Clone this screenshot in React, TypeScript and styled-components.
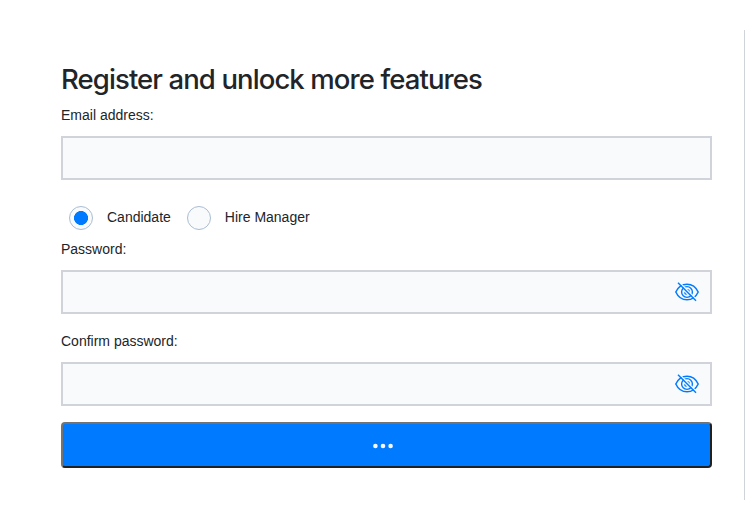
import React, { useState } from 'react';
import styled, { createGlobalStyle } from 'styled-components';

const GlobalStyle = createGlobalStyle`
  *, *::before, *::after { box-sizing: border-box; }
  body {
    margin: 0;
    background: #fff;
    color: #212529;
    font-family: "Liberation Sans", Arial, sans-serif;
    font-size: 14px;
  }
`;

const Page = styled.main`
  height: 530px;
  padding: 30px 0;
`;

const Panel = styled.form`
  height: 470px;
  padding: 32px 32px 0 61px;
  border-right: 1px solid #d1d3db;
  display: flex;
  flex-direction: column;
`;

const Title = styled.h1`
  margin: 0 0 8px;
  height: 34px;
  font: 550 27.5px/34px Inter, sans-serif;
  letter-spacing: -0.9px;
  white-space: nowrap;
`;

const Field = styled.div<{ $gap: number }>`
  display: flex;
  flex-direction: column;
  margin-bottom: ${({ $gap }) => $gap}px;
`;

const Label = styled.label`
  line-height: 22px;
  margin-bottom: 10px;
`;

const InputBox = styled.div`
  display: flex;
  align-items: center;
  height: 44px;
  padding-right: 11px;
  background: #f9fafc;
  border: 2px solid #d1d3db;
`;

const Input = styled.input`
  flex: 1;
  min-width: 0;
  height: 100%;
  padding: 0 12px;
  border: 0;
  outline: 0;
  background: transparent;
  font: inherit;
  color: inherit;
`;

const IconButton = styled.button`
  display: flex;
  padding: 0;
  border: 0;
  background: none;
  color: #007bff;
`;

const RadioGroup = styled.div`
  display: flex;
  height: 24px;
  margin: 0 0 8px 8px;
  gap: 16px;
`;

const RadioLabel = styled.label`
  display: flex;
  gap: 14px;
  line-height: 22px;
`;

const Radio = styled.input`
  appearance: none;
  flex: none;
  width: 24px;
  height: 24px;
  margin: 0;
  border: 1px solid #a9bdd3;
  border-radius: 50%;
  background: #f9fafc;

  &:checked {
    background: radial-gradient(circle, #007bff 6.7px, #f9fafc 7.3px);
  }
`;

const Submit = styled.button`
  display: flex;
  align-items: center;
  justify-content: center;
  height: 46px;
  padding: 2px 7px 0 0;
  border: 2px solid;
  border-color: #737373 #212121 #212121 #737373;
  border-radius: 4px;
  background: #007bff;
`;

const Dots = styled.svg`
  display: block;
  fill: #f4f8fd;
`;

const EyeOff = () => (
  <svg width="24" height="20" viewBox="0 0 24 20" fill="none" stroke="currentColor" strokeWidth="1.5">
    <path d="M.8 10C3 5.2 7 2.2 12 2.2S21 5.2 23.2 10C21 14.8 17 17.8 12 17.8S3 14.8.8 10Z" />
    <circle cx="12" cy="10" r="5.4" strokeWidth="1.4" />
    <path d="M9.5 10.4a2.5 2.5 0 0 0 2.1 2.1M12.4 7.5a2.5 2.5 0 0 1 2.1 2.1" strokeWidth="1.2" />
    <path d="M4.2.2 22 18" stroke="#f9fafc" strokeWidth="1.3" />
    <path d="M3 .8 21 18.8" />
  </svg>
);

type FieldProps = { id: string; label: string; gap: number; secret?: boolean };

const TextField = ({ id, label, gap, secret }: FieldProps) => {
  const [visible, setVisible] = useState(false);
  return (
    <Field $gap={gap}>
      <Label htmlFor={id}>{label}</Label>
      <InputBox>
        <Input id={id} type={secret && !visible ? 'password' : 'text'} />
        {secret && (
          <IconButton type="button" aria-label="Toggle visibility" onClick={() => setVisible(!visible)}>
            <EyeOff />
          </IconButton>
        )}
      </InputBox>
    </Field>
  );
};

export default function App() {
  return (
    <>
      <GlobalStyle />
      <Page>
        <Panel onSubmit={(e) => e.preventDefault()}>
          <Title>Register and unlock more features</Title>
          <TextField id="email" label="Email address:" gap={26} />
          <RadioGroup>
            <RadioLabel>
              <Radio type="radio" name="role" defaultChecked />
              Candidate
            </RadioLabel>
            <RadioLabel>
              <Radio type="radio" name="role" />
              Hire Manager
            </RadioLabel>
          </RadioGroup>
          <TextField id="password" label="Password:" gap={16} secret />
          <TextField id="confirm" label="Confirm password:" gap={16} secret />
          <Submit type="submit" aria-label="Submitting">
            <Dots width="22" height="6" viewBox="0 0 22 6">
              <circle cx="3.4" cy="3" r="2.3" />
              <circle cx="11" cy="3" r="2.3" />
              <circle cx="18.6" cy="3" r="2.3" />
            </Dots>
          </Submit>
        </Panel>
      </Page>
    </>
  );
}
